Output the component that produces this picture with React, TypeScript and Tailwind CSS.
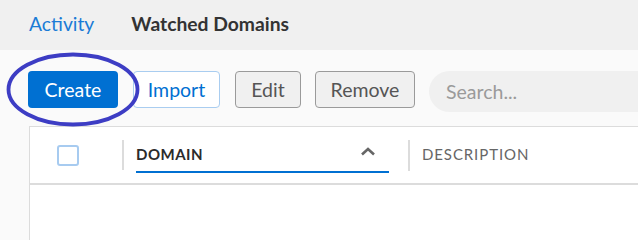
export default function App() {
  return (
    <div className="relative w-[639px] h-[244px] overflow-hidden bg-white font-['Lato','Open_Sans',sans-serif]">
      <div className="w-[638px]">
        {/* tabs */}
        <div className="flex h-[50px] items-center gap-[37px] bg-[#f0f0f0] pl-[29px] pb-[2px] text-[19.3px]">
          <span className="text-[#1a7bd6]">Activity</span>
          <span className="font-bold text-[#333]">Watched Domains</span>
        </div>

        {/* toolbar */}
        <div className="flex h-[76px] items-start bg-[#fafafa] pl-[28px] pt-[21px]">
          <button className="h-[37px] w-[90px] rounded-[4px] bg-[#0070d2] text-[19.5px] text-white">Create</button>
          <button className="ml-[15px] h-[37px] w-[87px] rounded-[4px] border border-[#a9cdf0] bg-white text-[19.5px] text-[#0070d2]">
            Import
          </button>
          <button className="ml-[15px] h-[37px] w-[66px] rounded-[4px] border border-[#9a9a9a] bg-[#f0f0f0] text-[19.5px] text-[#555]">
            Edit
          </button>
          <button className="ml-[14px] h-[37px] w-[100px] rounded-[4px] border border-[#9a9a9a] bg-[#f0f0f0] text-[19.5px] text-[#555]">
            Remove
          </button>
          <div className="ml-[14px] flex h-[41px] flex-1 items-center rounded-l-full bg-[#f0f0f0] pl-[17px] text-[19.5px] text-[#9a9a9a]">
            Search...
          </div>
        </div>

        {/* table */}
        <div className="flex bg-[#fafafa]">
          <div className="ml-[29px] h-[114px] flex-1 border-l border-t border-[#dcdcdc] bg-white">
            <div className="flex h-[58px] items-center border-b-2 border-[#dcdcdc]">
              <div className="w-[92px] pl-[27px]">
                <div className="h-[21px] w-[22px] rounded-[3px] border-2 border-[#a7cbf0] bg-white" />
              </div>
              <div className="h-[30px] w-[2px] bg-[#dcdcdc]" />
              <div className="relative flex h-full w-[284px] items-center pl-[12px]">
                <span className="pb-[2px] text-[15px] font-bold tracking-[0.5px] text-[#2b2b2b]">DOMAIN</span>
                <svg className="absolute left-[236px] top-[20px]" width="16" height="9" viewBox="0 0 16 9">
                  <path d="M2 7.5 L8 2 L14 7.5" fill="none" stroke="#666" strokeWidth="2.6" />
                </svg>
                <div className="absolute bottom-[10px] left-[12px] h-[2px] w-[253px] bg-[#0070d2]" />
              </div>
              <div className="h-[31px] w-[2px] bg-[#dcdcdc]" />
              <span className="pl-[12px] pb-[2px] text-[15px] tracking-[0.9px] text-[#666]">DESCRIPTION</span>
            </div>
          </div>
        </div>
      </div>

      {/* annotation ellipse */}
      <svg className="pointer-events-none absolute left-[4px] top-[52px]" width="138" height="76" viewBox="0 0 138 76">
        <ellipse cx="69" cy="37.5" rx="64.5" ry="35" fill="none" stroke="#3d3dc4" strokeWidth="3.8" />
      </svg>
    </div>
  )
}
